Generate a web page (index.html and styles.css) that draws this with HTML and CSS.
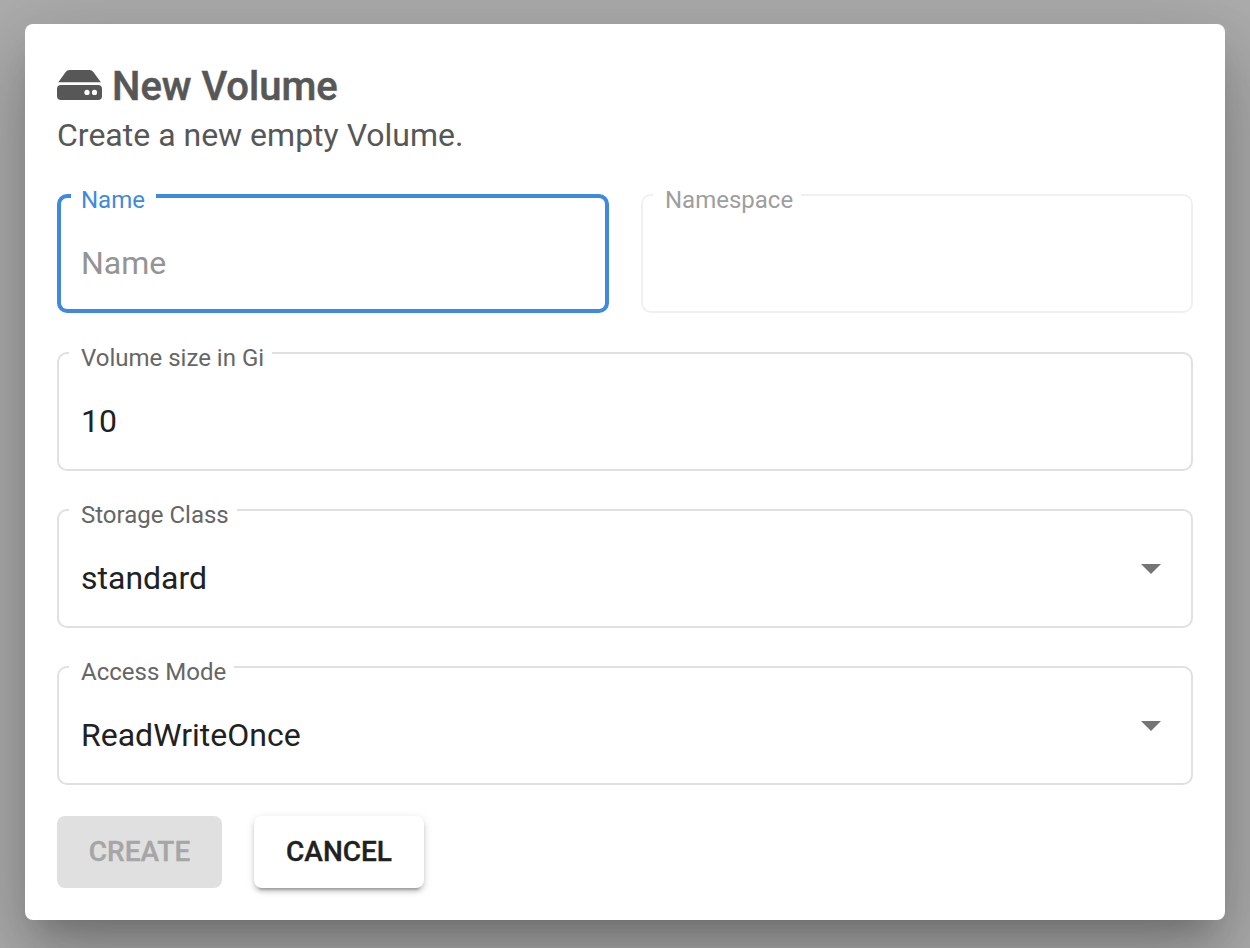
FILE: index.html
```html
<!DOCTYPE html>
<html lang="en">
<head>
<meta charset="utf-8">
<title>New Volume</title>
<link rel="stylesheet" href="styles.css">
</head>
<body>
<main class="dialog">
  <h1 class="title">
    <svg class="title-icon" viewBox="0 0 45 30" aria-hidden="true">
      <path fill="currentColor" d="M12.4 0H32.6Q35 0 36.3 1.9L43.9 12.3H1.3L8.7 1.9Q10 0 12.4 0Z"/>
      <path fill="currentColor" fill-rule="evenodd" d="M4 15H41Q45 15 45 19V26Q45 30 41 30H4Q0 30 0 26V19Q0 15 4 15ZM30 19.8a2.6 2.6 0 1 0 0 5.2a2.6 2.6 0 1 0 0-5.2ZM37.5 19.8a2.6 2.6 0 1 0 0 5.2a2.6 2.6 0 1 0 0-5.2Z"/>
    </svg>
    <span class="title-text">New Volume</span>
  </h1>
  <p class="subtitle">Create a new empty Volume.</p>
  <form class="form">
    <div class="row">
      <div class="field focused">
        <div class="edge start"></div>
        <div class="edge notch"><label class="label">Name</label></div>
        <div class="edge end"></div>
        <div class="value placeholder">Name</div>
      </div>
      <div class="field disabled">
        <div class="edge start"></div>
        <div class="edge notch"><label class="label">Namespace</label></div>
        <div class="edge end"></div>
      </div>
    </div>
    <div class="field size-field">
      <div class="edge start"></div>
      <div class="edge notch"><label class="label">Volume size in Gi</label></div>
      <div class="edge end"></div>
      <div class="value">10</div>
    </div>
    <div class="field">
      <div class="edge start"></div>
      <div class="edge notch"><label class="label">Storage Class</label></div>
      <div class="edge end"></div>
      <div class="value">standard<span class="arrow"></span></div>
    </div>
    <div class="field">
      <div class="edge start"></div>
      <div class="edge notch"><label class="label">Access Mode</label></div>
      <div class="edge end"></div>
      <div class="value">ReadWriteOnce<span class="arrow"></span></div>
    </div>
    <div class="actions">
      <button class="button create" type="button" disabled>CREATE</button>
      <button class="button cancel" type="button">CANCEL</button>
    </div>
  </form>
</main>
</body>
</html>
```
FILE: styles.css
```css
* { box-sizing: border-box; }
body {
  margin: 0;
  height: 948px;
  padding: 24px 25px 28px;
  overflow: hidden;
  background: #adadad;
  font-family: Roboto, "Liberation Sans", sans-serif;
  color: #212121;
}
.dialog {
  height: 896px;
  padding: 32px;
  border-radius: 8px;
  background: #fff;
  box-shadow: 0 22px 30px -14px rgba(0,0,0,.2), 0 48px 76px 6px rgba(0,0,0,.14), 0 18px 92px 16px rgba(0,0,0,.12);
}
.title {
  display: flex;
  align-items: center;
  gap: 10px;
  height: 58px;
  margin: 0;
  color: #575757;
  font-size: 40px;
  font-weight: 500;
  line-height: 58px;
}
.title-icon { width: 45px; height: 30px; }
.title-text { padding-top: 4px; -webkit-text-stroke: .5px currentColor; }
.subtitle {
  margin: 0;
  height: 40px;
  color: #575757;
  font-size: 32px;
  line-height: 42px;
}
.form {
  display: flex;
  flex-direction: column;
  gap: 38px;
  padding-top: 40px;
}
.row { display: grid; grid-template-columns: 1fr 1fr; gap: 32px; }
.field {
  --line: #e0e0e0;
  --w: 2px;
  display: grid;
  grid-template-columns: 12px max-content 1fr;
  height: 119px;
}
.size-field { margin-top: 1px; }
.edge { grid-row: 1; border: 0 solid var(--line); border-width: var(--w) 0; }
.start { grid-column: 1; border-left-width: var(--w); border-radius: 10px 0 0 10px; }
.notch { grid-column: 2; border-top-color: transparent; padding: 0 8px 0 12px; }
.end { grid-column: 3; border-right-width: var(--w); border-radius: 0 10px 10px 0; }
.label {
  display: block;
  margin-top: -11px;
  color: #666;
  font-size: 24px;
  line-height: 30px;
  white-space: nowrap;
}
.value {
  grid-area: 1 / 1 / 2 / 4;
  display: flex;
  justify-content: space-between;
  padding: 48px 32px 0 24px;
  font-size: 32px;
  line-height: 42px;
}
.placeholder { color: #949494; }
.arrow {
  width: 20px;
  height: 10px;
  margin-top: 7px;
  background: #757575;
  clip-path: polygon(0 0, 100% 0, 50% 100%);
}
.focused { --line: #4089e0; --w: 4px; grid-template-columns: 14px max-content 1fr; }
.focused .notch { padding: 0 11px 0 10px; }
.focused .label { margin-top: -13px; color: #4089e0; }
.disabled { --line: #f0f0f0; }
.disabled .label { color: #9e9e9e; }
.actions { display: flex; gap: 32px; margin-top: -7px; }
.button {
  height: 72px;
  padding: 0;
  border: 0;
  border-radius: 8px;
  font: 500 28px/70px Roboto, "Liberation Sans", sans-serif;
  -webkit-text-stroke: .35px currentColor;
}
.create { width: 165px; background: #e0e0e0; color: #a6a6a6; }
.cancel {
  width: 170px;
  background: #fff;
  color: #212121;
  box-shadow: 0 6px 2px -4px rgba(0,0,0,.2), 0 4px 4px 0 rgba(0,0,0,.14), 0 2px 10px 0 rgba(0,0,0,.12);
}
```
